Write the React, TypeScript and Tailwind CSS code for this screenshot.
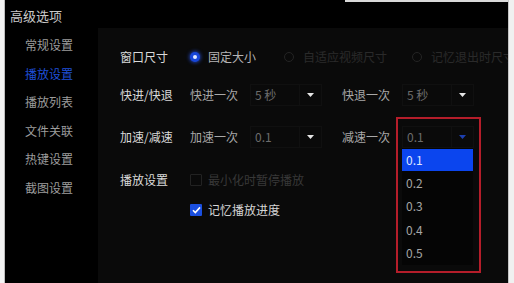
const MENU = ['常规设置', '播放设置', '播放列表', '文件关联', '热键设置', '截图设置'];
const SPEEDS = ['0.1', '0.2', '0.3', '0.4', '0.5'];

function Radio({ checked, disabled }: { checked?: boolean; disabled?: boolean }) {
  if (checked) {
    return (
      <span className="flex h-[10px] w-[10px] shrink-0 items-center justify-center rounded-full bg-[#1746d8] shadow-[0_0_4px_#2c5cff]">
        <span className="h-[4px] w-[4px] rounded-full bg-[#dfe8ff]" />
      </span>
    );
  }
  return (
    <span
      className={`h-[10px] w-[10px] shrink-0 rounded-full border ${disabled ? 'border-[#242424]' : 'border-[#777]'}`}
    />
  );
}

function Arrow({ active }: { active?: boolean }) {
  return (
    <svg width="7" height="4" viewBox="0 0 7 4">
      <path d="M0 0h7L3.5 4z" fill={active ? '#1d3fb0' : '#e6e6e6'} />
    </svg>
  );
}

function Select({ value, active }: { value: string; active?: boolean }) {
  return (
    <div className="flex h-[22px] w-[72px] shrink-0 items-center border border-[#101010]">
      <span className="flex-1 pl-[4px] text-[#6c6c6c]">{value}</span>
      <span className="flex h-full w-[22px] items-center justify-center border-l border-[#101010]">
        <Arrow active={active} />
      </span>
    </div>
  );
}

function Checkbox({ checked }: { checked?: boolean }) {
  if (checked) {
    return (
      <span className="flex h-[12px] w-[12px] shrink-0 items-center justify-center rounded-[1px] bg-[#1a4fe0]">
        <svg width="9" height="8" viewBox="0 0 9 8">
          <path d="M1 4.2l2.3 2.3L8 1.4" stroke="#fff" strokeWidth="1.6" fill="none" />
        </svg>
      </span>
    );
  }
  return <span className="h-[12px] w-[12px] shrink-0 rounded-[1px] border border-[#222]" />;
}

export default function App() {
  return (
    <div
      className="flex h-[283px] w-[514px] overflow-hidden bg-black text-[12px] leading-none whitespace-nowrap"
      style={{ fontFamily: '"Noto Sans CJK SC", "Liberation Sans", sans-serif' }}
    >
      <div className="w-[5px] shrink-0 border-r border-[#bdbdbd] bg-[#f3f3f3]" />
      <div className="flex min-w-0 flex-1 flex-col">
        <div className="flex h-[2px]">
          <div className="w-[340px]" />
          <div className="flex-1 bg-[#d9d9d9]" />
        </div>
        <div className="flex h-[26px] items-center pl-[5px] text-[13px] text-[#c9c9c9]">高级选项</div>
        <div className="flex min-h-0 flex-1">
          <div className="flex w-[93px] shrink-0 flex-col pl-[20px] pt-[3px]">
            {MENU.map((m, i) => (
              <div
                key={m}
                className={`flex h-[28.5px] items-center ${i === 1 ? 'text-[#1f4fd8]' : 'text-[#9c9c9c]'}`}
              >
                {m}
              </div>
            ))}
          </div>

          <div className="relative flex min-w-0 flex-1 flex-col overflow-hidden bg-[#0a0a0a] pl-[22px] pt-[17px]">
            <div className="flex h-[24px] items-center">
              <span className="w-[70px] shrink-0 text-[#dadada]">窗口尺寸</span>
              <span className="flex shrink-0 items-center gap-[8px] text-[#b5b5b5]">
                <Radio checked />
                固定大小
              </span>
              <span className="ml-[28px] flex shrink-0 items-center gap-[9px] text-[#2a2a2a]">
                <Radio disabled />
                自适应视频尺寸
              </span>
              <span className="ml-[25px] flex shrink-0 items-center gap-[9px] text-[#2a2a2a]">
                <Radio disabled />
                记忆退出时尺寸
              </span>
            </div>

            <div className="mt-[14px] flex h-[24px] items-center">
              <span className="w-[70px] shrink-0 text-[#dadada]">快进/快退</span>
              <span className="w-[60px] shrink-0 text-[#a8a8a8]">快进一次</span>
              <Select value="5 秒" />
              <span className="ml-[20px] w-[60px] shrink-0 text-[#a8a8a8]">快退一次</span>
              <Select value="5 秒" />
            </div>

            <div className="mt-[18px] flex h-[24px] items-center">
              <span className="w-[70px] shrink-0 text-[#dadada]">加速/减速</span>
              <span className="w-[60px] shrink-0 text-[#a8a8a8]">加速一次</span>
              <Select value="0.1" />
              <span className="ml-[20px] w-[60px] shrink-0 text-[#a8a8a8]">减速一次</span>
              <Select value="0.1" active />
            </div>

            <div className="mt-[19px] flex h-[24px] items-center">
              <span className="w-[70px] shrink-0 text-[#dadada]">播放设置</span>
              <span className="flex items-center gap-[6px] text-[#383838]">
                <Checkbox />
                最小化时暂停播放
              </span>
            </div>

            <div className="mt-[6px] flex h-[24px] items-center pl-[70px]">
              <span className="flex items-center gap-[6px] text-[#d6d6d6]">
                <Checkbox checked />
                记忆播放进度
              </span>
            </div>

            <div className="absolute left-[304px] top-[120px] flex w-[71px] flex-col bg-[#050505] pt-[1px]">
              {SPEEDS.map((s, i) => (
                <div
                  key={s}
                  className={`flex items-center pl-[4px] ${
                    i === 0 ? 'h-[22px] bg-[#0b45ee] text-[#dfe6ff]' : 'h-[23.5px] text-[#a6a6a6]'
                  }`}
                >
                  {s}
                </div>
              ))}
            </div>

            <div className="absolute left-[298px] top-[89px] h-[156px] w-[85px] border-2 border-[#b51d2a]" />
          </div>
        </div>
      </div>
      <div className="w-[6px] shrink-0 border-l border-[#c4c4c4] bg-[#f0f0f0]" />
    </div>
  );
}
